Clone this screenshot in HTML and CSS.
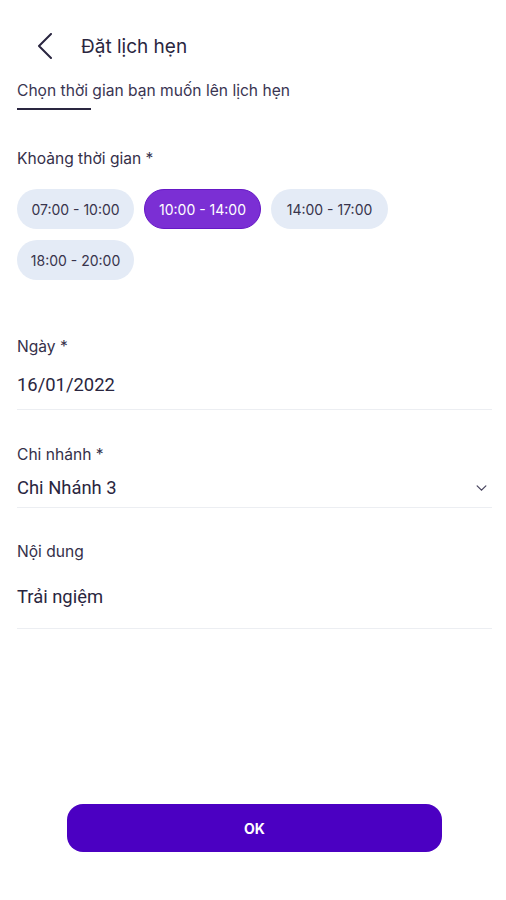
FILE: index.html
```html
<!DOCTYPE html>
<html lang="vi">
    <head>
        <meta charset="UTF-8" />
        <meta name="viewport" content="width=device-width, initial-scale=1.0" />
        <title>Đặt lịch hẹn</title>
        <link rel="stylesheet" href="styles.css">
    </head>
    <body>
        <div class="screen">
            <div class="header">
                <svg class="back" viewBox="0 0 16 26" width="16" height="26">
                    <path d="M14 1 L2 13 L14 25" fill="none" stroke="#2a2640" stroke-width="2" stroke-linecap="round" stroke-linejoin="round" />
                </svg>
                <div class="title">Đặt lịch hẹn</div>
            </div>

            <div class="tab">Chọn thời gian bạn muốn lên lịch hẹn</div>
            <div class="tab-line"></div>

            <div class="label label-slots">Khoảng thời gian *</div>
            <div class="slots">
                <div class="slot">07:00 - 10:00</div>
                <div class="slot active">10:00 - 14:00</div>
                <div class="slot">14:00 - 17:00</div>
                <div class="slot">18:00 - 20:00</div>
            </div>

            <div class="field field-date">
                <div class="label">Ngày *</div>
                <div class="value">16/01/2022</div>
            </div>

            <div class="field field-branch">
                <div class="label">Chi nhánh *</div>
                <div class="value select">
                    <span>Chi Nhánh 3</span>
                    <svg viewBox="0 0 12 8" width="11" height="7">
                        <path d="M1 1 L6 6 L11 1" fill="none" stroke="#4a4660" stroke-width="1.4" stroke-linecap="round" />
                    </svg>
                </div>
            </div>

            <div class="field field-note">
                <div class="label">Nội dung</div>
                <div class="value">Trải ngiệm</div>
            </div>

            <button class="ok">OK</button>
        </div>
    </body>
</html>
```

FILE: styles.css
```css
body {
    margin: 0;
    background-color: #fff;
    font-family: Inter, "Noto Sans", sans-serif;
    color: #2a2640;
}

.screen {
    display: flex;
    flex-direction: column;
    padding: 0 14px 0 17px;
}

.header {
    display: flex;
    align-items: center;
    height: 36px;
    padding-top: 28px;
    padding-left: 20px;
}

.back {
    margin-right: 28px;
}

.title {
    font-size: 19px;
}

.tab {
    margin-top: 17px;
    font-size: 15.6px;
    line-height: 20px;
    color: #3a3552;
}

.tab-line {
    width: 74px;
    height: 2px;
    margin-top: 7px;
    background-color: #2a2640;
}

.label {
    font-size: 15.6px;
    line-height: 20px;
    color: #35304a;
}

.label-slots {
    margin-top: 39px;
}

.slots {
    display: flex;
    flex-wrap: wrap;
    gap: 11px 10px;
    margin-top: 20px;
}

.slot {
    width: 117px;
    height: 40px;
    border-radius: 20px;
    background-color: #e4ebf6;
    box-sizing: border-box;
    display: flex;
    align-items: center;
    justify-content: center;
    font-size: 14px;
    color: #38344c;
}

.slot.active {
    background-color: #7b2fd4;
    border: 1px solid #6618c6;
    color: #fff;
}

.field {
    border-bottom: 1px solid #eceef2;
}

.field-date {
    margin-top: 57px;
}

.field-date .value {
    margin-top: 16px;
    padding-bottom: 12px;
}

.field-branch {
    margin-top: 35px;
}

.field-branch .value {
    margin-top: 11px;
    padding-bottom: 7px;
}

.field-note {
    margin-top: 34px;
}

.field-note .value {
    margin-top: 23px;
    padding-bottom: 19px;
}

.value {
    font-family: Roboto, "Noto Sans", sans-serif;
    font-size: 18.4px;
    line-height: 24px;
    color: #2a2640;
}

.select {
    display: flex;
    justify-content: space-between;
    align-items: center;
    padding-right: 5px;
}

.ok {
    align-self: center;
    width: 375px;
    height: 48px;
    margin-top: 175px;
    border: none;
    border-radius: 16px;
    background-color: #4b00c2;
    color: #fff;
    font-family: Inter, sans-serif;
    font-size: 14px;
    font-weight: 700;
}
```
